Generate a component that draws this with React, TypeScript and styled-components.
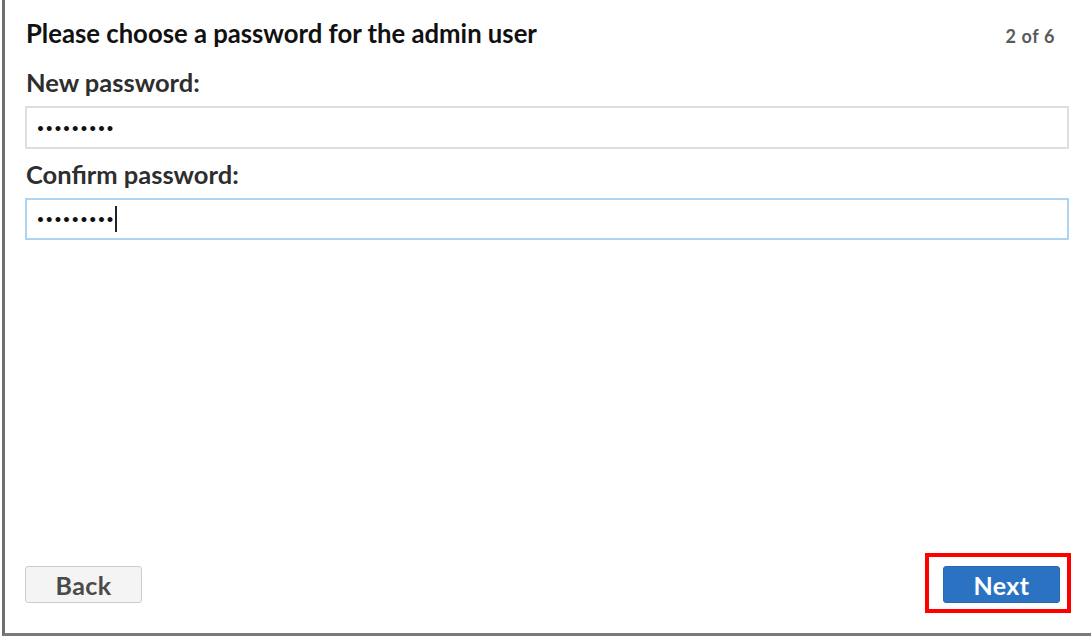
import React from "react";
import styled, { createGlobalStyle } from "styled-components";

const Global = createGlobalStyle`
  html, body { margin: 0; padding: 0; background: #ffffff; }
  body { font-family: "Lato", "Open Sans", sans-serif; }
  * { box-sizing: border-box; }
`;

const Frame = styled.div`
  margin-left: 2px;
  width: 1089px;
  height: 636px;
  border-left: 3px solid #6f6f6f;
  border-bottom: 3px solid #7a7a7a;
  background: #fff;
  display: flex;
  flex-direction: column;
  padding: 18px 22px 20px 20px;
`;

const Header = styled.div`
  display: flex;
  justify-content: space-between;
  align-items: baseline;
  height: 30px;
`;

const Title = styled.h1`
  margin: 0 0 0 1px;
  font-size: 25.7px;
  line-height: 30px;
  font-weight: 700;
  color: #111;
`;

const Step = styled.span`
  font-size: 18px;
  font-weight: 700;
  color: #5a5a5a;
  letter-spacing: 0.6px;
  margin-right: 14px;
`;

const Label = styled.label<{ $gap: number }>`
  display: block;
  margin: ${(p) => p.$gap}px 0 0 1px;
  font-size: 25.5px;
  font-weight: 700;
  color: #2e2e2e;
  line-height: 30px;
`;

const Box = styled.div<{ $focused?: boolean }>`
  margin-top: 9px;
  height: ${(p) => (p.$focused ? 42 : 43)}px;
  border: 2px solid ${(p) => (p.$focused ? "#aed4f2" : "#dedede")};
  display: flex;
  align-items: center;
  padding-left: 9px;
`;

const Dots = styled.span`
  font-family: "DejaVu Sans", sans-serif;
  font-size: 14px;
  font-weight: 700;
  letter-spacing: -0.25px;
  color: #111;
  line-height: 1;
  margin-top: 2px;
`;

const Caret = styled.span`
  display: inline-block;
  width: 2px;
  height: 26px;
  background: #222;
  margin-left: 1px;
`;

const Spacer = styled.div`
  flex: 1;
`;

const Footer = styled.div`
  display: flex;
  justify-content: space-between;
  align-items: flex-end;
`;

const Button = styled.button<{ $primary?: boolean }>`
  width: 117px;
  height: 37px;
  border-radius: 3px;
  font-family: "Lato", sans-serif;
  font-size: 25px;
  font-weight: 700;
  letter-spacing: 0.4px;
  cursor: pointer;
  border: 1px solid ${(p) => (p.$primary ? "#2669b3" : "#cccccc")};
  background: ${(p) => (p.$primary ? "#2b73c2" : "#f4f4f4")};
  color: ${(p) => (p.$primary ? "#ffffff" : "#4a4a4a")};
  padding: 0;
  margin-bottom: ${(p) => (p.$primary ? 0 : 10)}px;
`;

const Highlight = styled.div`
  border: 4px solid #ff0000;
  padding: 9px 7px 6px 14px;
  margin-right: -2px;
`;

export default function App() {
  return (
    <>
      <Global />
      <Frame>
        <Header>
          <Title>Please choose a password for the admin user</Title>
          <Step>2 of 6</Step>
        </Header>
        <Label $gap={19}>New password:</Label>
        <Box>
          <Dots>•••••••••</Dots>
        </Box>
        <Label $gap={10}>Confirm password:</Label>
        <Box $focused>
          <Dots>•••••••••</Dots>
          <Caret />
        </Box>
        <Spacer />
        <Footer>
          <Button>Back</Button>
          <Highlight>
            <Button $primary>Next</Button>
          </Highlight>
        </Footer>
      </Frame>
    </>
  );
}
